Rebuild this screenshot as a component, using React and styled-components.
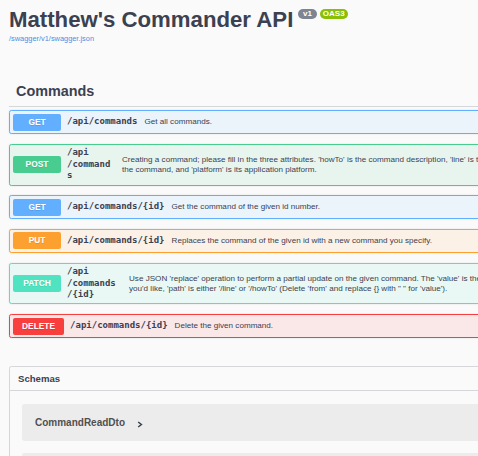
import React from "react";
import styled, { createGlobalStyle } from "styled-components";

const GlobalStyle = createGlobalStyle`
  html, body {
    margin: 0;
    padding: 0;
    background: #fafafa;
    overflow: hidden;
  }
  body {
    font-family: "Liberation Sans", Arial, sans-serif;
    color: #3b4151;
  }
`;

const METHODS = {
  get: { color: "#61affe", bg: "#ebf3fb" },
  post: { color: "#49cc90", bg: "#e8f5ef" },
  put: { color: "#fca130", bg: "#fbf1e6" },
  patch: { color: "#50e3c2", bg: "#e9f8f4" },
  delete: { color: "#f93e3e", bg: "#fae7e7" },
};

const operations = [
  { method: "get", path: "/api/commands", summary: "Get all commands." },
  {
    method: "post",
    path: "/api/commands",
    pathWidth: 48,
    summary:
      "Creating a command; please fill in the three attributes. 'howTo' is the command description, 'line' is the command line of the command, and 'platform' is its application platform.",
  },
  {
    method: "get",
    path: "/api/commands/{id}",
    summary: "Get the command of the given id number.",
  },
  {
    method: "put",
    path: "/api/commands/{id}",
    summary:
      "Replaces the command of the given id with a new command you specify.",
  },
  {
    method: "patch",
    path: "/api/commands/{id}",
    pathWidth: 55,
    summary:
      "Use JSON 'replace' operation to perform a partial update on the given command. The 'value' is the new value that you'd like, 'path' is either '/line' or '/howTo' (Delete 'from' and replace {} with \" \" for 'value').",
  },
  {
    method: "delete",
    path: "/api/commands/{id}",
    summary: "Delete the given command.",
  },
];

const models = [
  "CommandReadDto",
  "CommandCreateDto",
  "CommandUpdateDto",
  "Operation",
];

const Page = styled.div`
  width: 546px;
  padding: 0 9px;
`;

const Info = styled.div`
  padding-top: 7px;
  margin-bottom: 32.5px;
`;

const TitleRow = styled.div`
  display: flex;
  align-items: flex-start;
`;

const Title = styled.h2`
  margin: 0;
  font-size: 22.2px;
  line-height: 26px;
  font-weight: 700;
  color: #3b4151;
`;

const Badge = styled.span`
  margin: 2px 0 0 ${(p) => p.$gap}px;
  padding: 1px 3px;
  border-radius: 57px;
  background: ${(p) => p.$bg};
  color: #fff;
  font-size: 8px;
  line-height: 8px;
  font-weight: 700;
  white-space: pre;
`;

const SpecLink = styled.a`
  display: block;
  margin-top: 1px;
  font-size: 7.4px;
  line-height: 9px;
  color: #4990e2;
  text-decoration: none;
`;

const TagHeader = styled.h3`
  margin: 0 0 3.5px;
  padding: 6px 12px 6px 7px;
  border-bottom: 1px solid #d6d7db;
  font-size: 14.4px;
  line-height: 18px;
  font-weight: 700;
  color: #3b4151;
`;

const OpBlock = styled.div`
  display: flex;
  align-items: center;
  margin-bottom: 9.4px;
  padding: 2.7px 3px;
  border: 1px solid ${(p) => METHODS[p.$method].color};
  border-radius: 2.4px;
  background: ${(p) => METHODS[p.$method].bg};
  box-shadow: 0 0 2px rgba(0, 0, 0, 0.12);
`;

const MethodLabel = styled.span`
  flex-shrink: 0;
  min-width: 48px;
  height: 17px;
  box-sizing: border-box;
  padding: 0 9px;
  border-radius: 2px;
  background: ${(p) => METHODS[p.$method].color};
  color: #fff;
  font-size: 8.4px;
  line-height: 17px;
  font-weight: 700;
  text-align: center;
  text-shadow: 0 1px 0 rgba(0, 0, 0, 0.1);
`;

const Path = styled.span`
  flex-shrink: 0;
  width: ${(p) => (p.$width ? `${p.$width}px` : "auto")};
  padding: 0 6px;
  font-family: "DejaVu Sans Mono", "Liberation Mono", monospace;
  font-size: 9px;
  line-height: 11.5px;
  font-weight: 700;
  color: #3b4151;
  overflow-wrap: break-word;
`;

const Summary = styled.div`
  flex: 1 1 auto;
  padding-left: 1px;
  font-size: 8.1px;
  line-height: 9.5px;
  color: #3b4151;
`;

const Models = styled.section`
  margin-top: 27.5px;
  border: 1px solid #d6d7db;
  border-radius: 2.4px;
`;

const ModelsHeader = styled.h4`
  margin: 0;
  padding: 6px 12px 6px 8px;
  border-bottom: 1px solid #d6d7db;
  font-size: 9.6px;
  line-height: 11px;
  font-weight: 700;
  color: #3b4151;
`;

const ModelList = styled.div`
  padding: 13px 12px 0 12px;
`;

const ModelContainer = styled.div`
  display: flex;
  align-items: center;
  height: 37px;
  margin-bottom: 12px;
  padding-left: 13px;
  border-radius: 2.4px;
  background: #ececec;
`;

const ModelTitle = styled.span`
  font-size: 10px;
  font-weight: 700;
  color: #505050;
`;

const Toggle = styled.svg`
  margin: 4px 0 0 12px;
`;

const Arrow = () => (
  <Toggle width="6" height="7" viewBox="0 0 6 7">
    <path
      d="M1.2 1 L4.4 3.5 L1.2 6"
      fill="none"
      stroke="#3b4151"
      strokeWidth="1.5"
    />
  </Toggle>
);

export default function App() {
  return (
    <>
      <GlobalStyle />
      <Page>
        <Info>
          <TitleRow>
            <Title>Matthew's Commander API</Title>
            <Badge $bg="#7d8492" $gap={4.5}>
              {" v1 "}
            </Badge>
            <Badge $bg="#89bf04" $gap={2.7}>
              OAS3
            </Badge>
          </TitleRow>
          <SpecLink href="#">/swagger/v1/swagger.json</SpecLink>
        </Info>

        <TagHeader>Commands</TagHeader>
        {operations.map((op, i) => (
          <OpBlock key={i} $method={op.method}>
            <MethodLabel $method={op.method}>
              {op.method.toUpperCase()}
            </MethodLabel>
            <Path $width={op.pathWidth}>
              {op.path.replace(/\//g, "\u200b/")}
            </Path>
            <Summary>{op.summary}</Summary>
          </OpBlock>
        ))}

        <Models>
          <ModelsHeader>Schemas</ModelsHeader>
          <ModelList>
            {models.map((name) => (
              <ModelContainer key={name}>
                <ModelTitle>{name}</ModelTitle>
                <Arrow />
              </ModelContainer>
            ))}
          </ModelList>
        </Models>
      </Page>
    </>
  );
}
